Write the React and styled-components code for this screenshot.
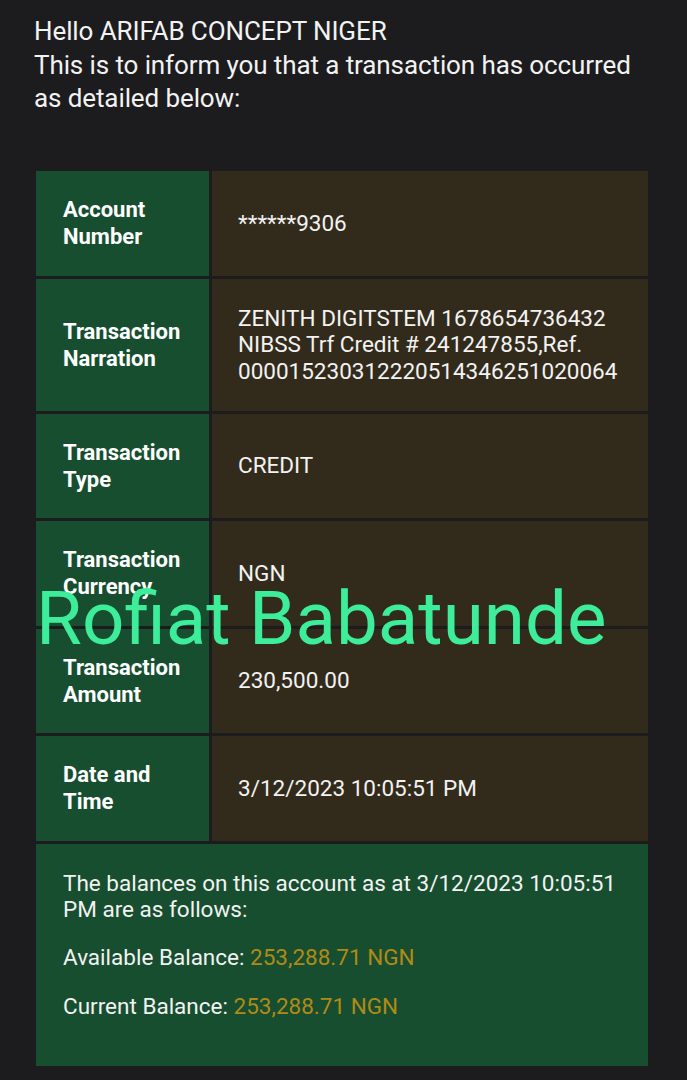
import React from 'react';
import styled, { createGlobalStyle } from 'styled-components';

const Global = createGlobalStyle`
  html, body { margin: 0; padding: 0; background: #1c1c1e; }
  body { font-family: Roboto, "Liberation Sans", sans-serif; color: #f2f2f2; }
`;

const Page = styled.div`
  position: relative;
  width: 687px;
  height: 1080px;
  overflow: hidden;
  padding: 15px 39px 0 34px;
  box-sizing: border-box;
`;

const Intro = styled.p`
  margin: 0 0 55px;
  font-size: 26px;
  line-height: 33.5px;
  letter-spacing: -0.1px;
`;

const Table = styled.div`
  display: grid;
  grid-template-columns: 173px 1fr;
  gap: 3px;
  margin-left: 2px;
`;

const Label = styled.div`
  background: #164e2f;
  color: #ffffff;
  font-weight: 700;
  font-size: 22px;
  line-height: 27px;
  padding: 0 20px 0 27px;
  min-height: ${p => p.h}px;
  display: flex;
  align-items: center;
`;

const Value = styled.div`
  background: #322b1b;
  font-size: 22.5px;
  line-height: 26.5px;
  padding: 0 20px 0 26px;
  min-height: ${p => p.h}px;
  display: flex;
  align-items: center;
`;

const Balance = styled.div`
  grid-column: 1 / -1;
  background: #164e2f;
  padding: 26px 20px 26px 27px;
  height: 222px;
  box-sizing: border-box;
  font-size: 22.5px;
  line-height: 26px;

  p { margin: 0 0 22.5px; }
`;

const Amount = styled.span`
  color: #b08a17;
`;

const Watermark = styled.div`
  position: absolute;
  left: 36px;
  top: 582px;
  font-size: 74.5px;
  line-height: 1;
  color: #3ded9a;
  white-space: nowrap;
`;

const rows = [
  ['Account Number', '******9306', 105],
  ['Transaction Narration', 'ZENITH DIGITSTEM 1678654736432 NIBSS Trf Credit # 241247855,Ref. 000015230312220514346251020064', 132],
  ['Transaction Type', 'CREDIT', 104],
  ['Transaction Currency', 'NGN', 105],
  ['Transaction Amount', '230,500.00', 104],
  ['Date and Time', '3/12/2023 10:05:51 PM', 105],
];

export default function App() {
  return (
    <Page>
      <Global />
      <Intro>
        Hello ARIFAB CONCEPT NIGER<br />
        This is to inform you that a transaction has occurred as detailed below:
      </Intro>
      <Table>
        {rows.map(([label, value, h]) => (
          <React.Fragment key={label}>
            <Label h={h}>{label}</Label>
            <Value h={h}>{value}</Value>
          </React.Fragment>
        ))}
        <Balance>
          <p>The balances on this account as at 3/12/2023 10:05:51 PM are as follows:</p>
          <p>Available Balance: <Amount>253,288.71 NGN</Amount></p>
          <p>Current Balance: <Amount>253,288.71 NGN</Amount></p>
        </Balance>
      </Table>
      <Watermark>Rofiat Babatunde</Watermark>
    </Page>
  );
}
